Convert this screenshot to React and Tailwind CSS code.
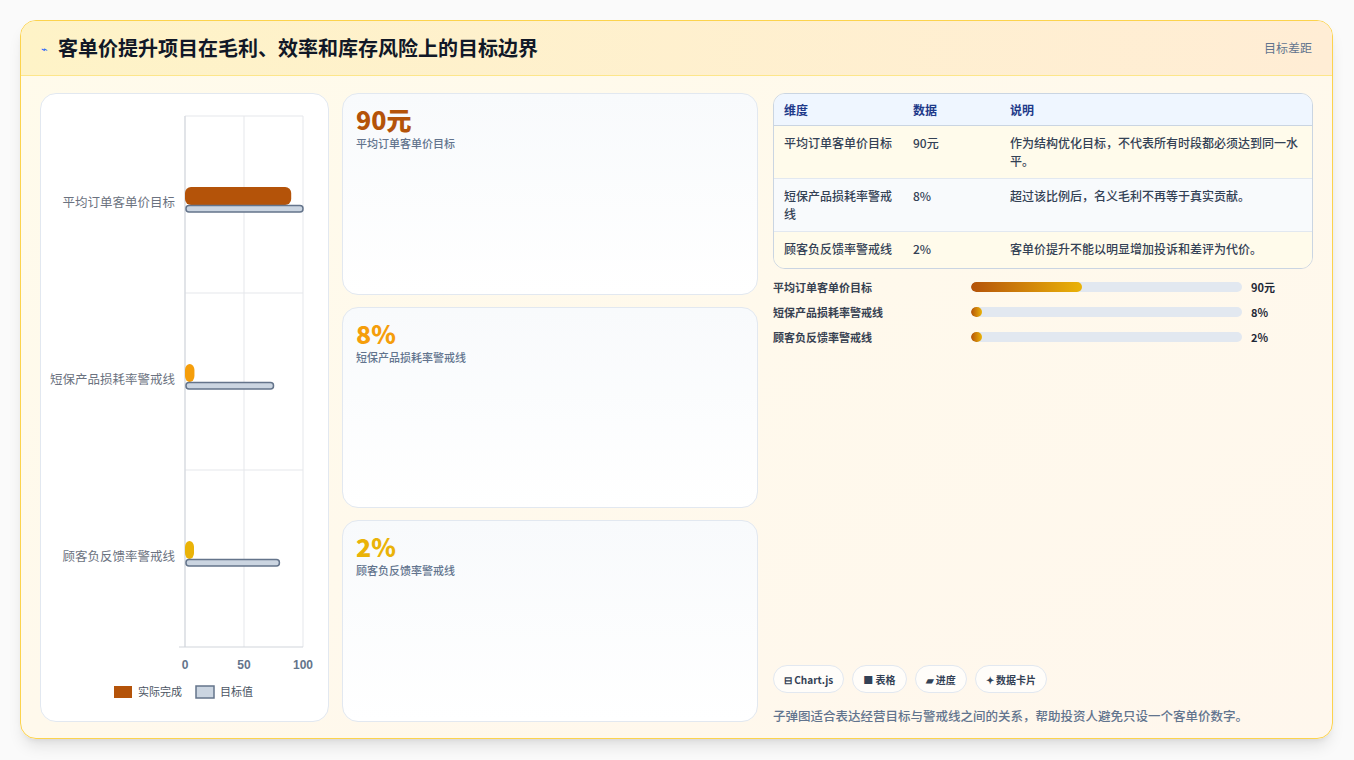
import React from "react";

const F = { fontFamily: '"Noto Sans CJK SC", "Noto Sans", sans-serif' };

function Chart() {
  const x0 = 144, w = 118;
  const sx = (v) => x0 + (v / 100) * w;
  const rows = [
    { label: "平均订单客单价目标", a: 90, t: 100, c: "#b45309", y: 22 },
    { label: "短保产品损耗率警戒线", a: 8, t: 75, c: "#f59e0b", y: 199 },
    { label: "顾客负反馈率警戒线", a: 2, t: 80, c: "#eab308", y: 376 },
  ];
  return (
    <svg width="288" height="627" viewBox="0 0 288 627" style={F}>
      {[0, 50, 100].map((v) => (
        <line key={v} x1={sx(v)} y1="22" x2={sx(v)} y2="553" stroke="#e5e7eb" />
      ))}
      <line x1={x0 - 6} y1="553" x2={sx(100)} y2="553" stroke="#d1d5db" />
      {[22, 199, 376].map((y) => (
        <line key={y} x1={x0} y1={y} x2={sx(100)} y2={y} stroke="#e5e7eb" />
      ))}
      <line x1={x0} y1="22" x2={x0} y2="553" stroke="#d1d5db" />
      {rows.map((r, i) => {
        const top = r.y + 71;
        return (
          <g key={i}>
            <text x={x0 - 10} y={top + 20} textAnchor="end" fontSize="12.5" fill="#6b7280">{r.label}</text>
            <rect x={x0} y={top} width={Math.max(sx(r.a) - x0, 9)} height="18" rx="6" fill={r.c} />
            <rect x={x0 + 1} y={top + 18.5} width={sx(r.t) - x0 - 1} height="6.5" rx="3" fill="#cbd5e1" stroke="#64748b" strokeWidth="1.5" />
          </g>
        );
      })}
      {[0, 50, 100].map((v) => (
        <text key={v} x={sx(v)} y="575" textAnchor="middle" fontSize="12" fontWeight="600" fill="#64748b" fontFamily="Liberation Sans, sans-serif">{v}</text>
      ))}
      <rect x="73" y="592" width="18" height="12" fill="#b45309" />
      <text x="97" y="602" fontSize="11" fill="#4b5563">实际完成</text>
      <rect x="155" y="592" width="18" height="12" fill="#cbd5e1" stroke="#64748b" strokeWidth="1.5" />
      <text x="179" y="602" fontSize="11" fill="#4b5563">目标值</text>
    </svg>
  );
}

function KCard({ v, l, c }) {
  return (
    <div className="flex-1 rounded-2xl border border-slate-200 bg-gradient-to-b from-[#f8fafc] to-white px-[13px] py-[9px]">
      <div className={`text-[25px] font-extrabold leading-[32px] ${c}`}>{v}</div>
      <div className="text-[11px] text-slate-500 font-medium">{l}</div>
    </div>
  );
}

const tableRows = [
  ["平均订单客单价目标", "90元", "作为结构优化目标，不代表所有时段都必须达到同一水平。", "bg-[#fffbeb]", "h-[53px]"],
  ["短保产品损耗率警戒线", "8%", "超过该比例后，名义毛利不再等于真实贡献。", "bg-[#f8fafc]", "h-[53px]"],
  ["顾客负反馈率警戒线", "2%", "客单价提升不能以明显增加投诉和差评为代价。", "bg-[#fffbeb]", "h-[36px]"],
];

const bars = [
  ["平均订单客单价目标", 41, "90元"],
  ["短保产品损耗率警戒线", 4, "8%"],
  ["顾客负反馈率警戒线", 4, "2%"],
];

export default function App() {
  return (
    <div className="w-[1354px] h-[760px] bg-[#fafafa] pt-[20px] pl-[20px]" style={F}>
      <div className="w-[1313px] h-[719px] rounded-2xl border border-[#fcd34d] bg-gradient-to-br from-[#fffbeb] to-[#fff7ed] overflow-hidden flex flex-col shadow-lg">
        <div className="h-[55px] shrink-0 flex items-center justify-between px-[20px] bg-gradient-to-r from-[#fef3c7] to-[#ffedd5] border-b border-[#fde68a]">
          <div className="flex items-center gap-[10px]">
            <span className="text-[11px] text-blue-600">⌁</span>
            <span className="text-[20px] font-bold text-[#111827]">客单价提升项目在毛利、效率和库存风险上的目标边界</span>
          </div>
          <span className="text-[12px] text-slate-500">目标差距</span>
        </div>
        <div className="flex-1 flex gap-[13px] px-[19px] pt-[17px] pb-[18px]">
          <div className="w-[289px] rounded-2xl border border-slate-200 bg-white overflow-hidden">
            <Chart />
          </div>
          <div className="w-[416px] flex flex-col gap-[12px]">
            <KCard v="90元" l="平均订单客单价目标" c="text-[#b45309]" />
            <KCard v="8%" l="短保产品损耗率警戒线" c="text-[#f59e0b]" />
            <KCard v="2%" l="顾客负反馈率警戒线" c="text-[#eab308]" />
          </div>
          <div className="flex-1 flex flex-col pl-[2px]">
            <div className="rounded-xl border border-slate-300 overflow-hidden text-[12px] text-[#334155] font-medium">
              <div className="h-[32px] flex items-center bg-[#eff6ff] text-[#1e3a8a] font-bold border-b border-slate-300">
                <div className="w-[139px] pl-[10px]">维度</div>
                <div className="w-[97px]">数据</div>
                <div className="flex-1">说明</div>
              </div>
              {tableRows.map((r, i) => (
                <div key={i} className={`flex ${r[3]} ${r[4]} pt-[8px] leading-[18px] ${i < 2 ? "border-b border-slate-200" : ""}`}>
                  <div className="w-[139px] pl-[10px] pr-[18px]">{r[0]}</div>
                  <div className="w-[97px]">{r[1]}</div>
                  <div className="flex-1 pr-[14px]">{r[2]}</div>
                </div>
              ))}
            </div>
            <div className="mt-[9px] flex flex-col gap-[7px]">
              {bars.map((b, i) => (
                <div key={i} className="flex items-center h-[18px] text-[11px] font-semibold text-[#374151]">
                  <div className="w-[198px]">{b[0]}</div>
                  <div className="w-[271px] h-[10px] rounded-full bg-[#e2e8f0] overflow-hidden">
                    <div className="h-full rounded-full bg-gradient-to-r from-[#b45309] to-[#eab308]" style={{ width: `${b[1]}%` }} />
                  </div>
                  <div className="pl-[9px] font-bold text-[#1f2937]">{b[2]}</div>
                </div>
              ))}
            </div>
            <div className="flex-1" />
            <div className="flex gap-[8px] mb-[14px]">
              {["⊟ Chart.js", "■ 表格", "▰ 进度", "✦ 数据卡片"].map((t) => (
                <span key={t} className="h-[28px] px-[10px] rounded-full border border-slate-200 bg-white/70 flex items-center text-[10px] font-bold text-[#334155]">{t}</span>
              ))}
            </div>
            <div className="text-[12.5px] text-slate-500 font-medium mb-[-4px]">子弹图适合表达经营目标与警戒线之间的关系，帮助投资人避免只设一个客单价数字。</div>
          </div>
        </div>
      </div>
    </div>
  );
}
